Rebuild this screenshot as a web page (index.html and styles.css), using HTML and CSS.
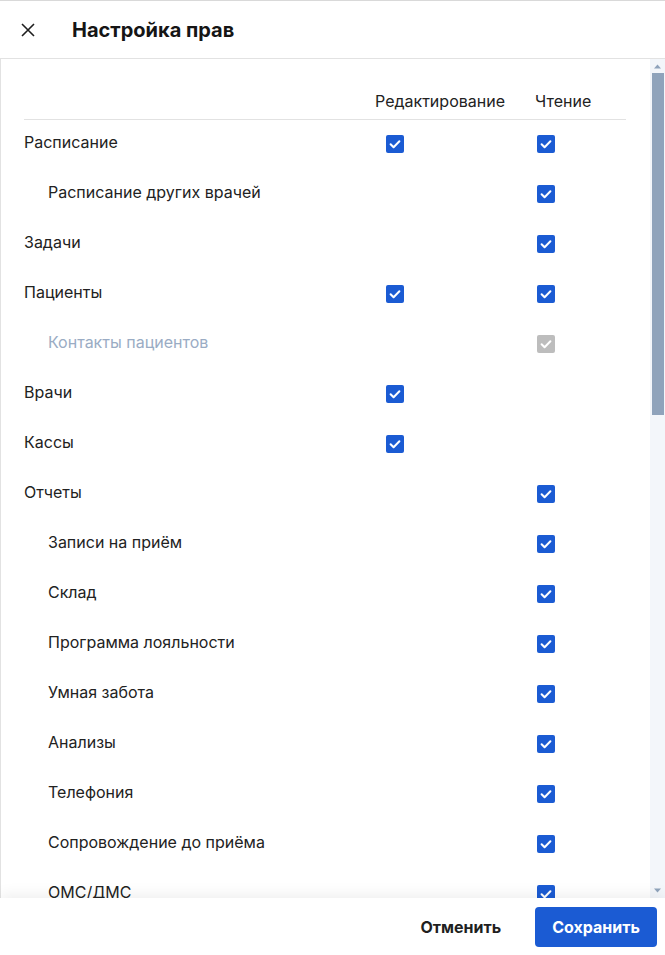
FILE: index.html
```html
<!DOCTYPE html>
<html lang="ru">
<head>
<meta charset="utf-8">
<title>Настройка прав</title>
<link rel="stylesheet" href="styles.css">
</head>
<body>
<div class="dialog">
  <header class="dialog-header">
    <button class="close-btn" aria-label="Закрыть">
      <svg width="14" height="14" viewBox="0 0 14 14"><path d="M1 1L13 13M13 1L1 13" stroke="#1f1f1f" stroke-width="1.6" fill="none"/></svg>
    </button>
    <h1 class="dialog-title">Настройка прав</h1>
  </header>
  <div class="dialog-main">
    <div class="dialog-body">
      <div class="perm-head">
        <div></div>
        <div class="col-title">Редактирование</div>
        <div class="col-title">Чтение</div>
      </div>
      <div class="perm-list" id="list"></div>
    </div>
    <div class="scrollbar" aria-hidden="true">
      <div class="sb-btn"><svg width="15" height="15" viewBox="0 0 15 15"><path d="M4 9.5L7.5 5.5L11 9.5Z" fill="#8fa3bb"/></svg></div>
      <div class="sb-track"><div class="sb-thumb"></div></div>
      <div class="sb-btn"><svg width="15" height="15" viewBox="0 0 15 15"><path d="M4 5.5L7.5 9.5L11 5.5Z" fill="#8fa3bb"/></svg></div>
    </div>
  </div>
  <footer class="dialog-footer">
    <button class="btn btn-text">Отменить</button>
    <button class="btn btn-primary">Сохранить</button>
  </footer>
</div>
<script src="app.js"></script>
</body>
</html>
```
FILE: app.js
```js
const rows = [
  ["Расписание", 0, 1, 1],
  ["Расписание других врачей", 1, 0, 1],
  ["Задачи", 0, 0, 1],
  ["Пациенты", 0, 1, 1],
  ["Контакты пациентов", 1, 0, 2],
  ["Врачи", 0, 1, 0],
  ["Кассы", 0, 1, 0],
  ["Отчеты", 0, 0, 1],
  ["Записи на приём", 1, 0, 1],
  ["Склад", 1, 0, 1],
  ["Программа лояльности", 1, 0, 1],
  ["Умная забота", 1, 0, 1],
  ["Анализы", 1, 0, 1],
  ["Телефония", 1, 0, 1],
  ["Сопровождение до приёма", 1, 0, 1],
  ["ОМС/ДМС", 1, 0, 1]
];
const check = (state) => {
  if (!state) return '<span class="cb-empty"></span>';
  const cls = state === 2 ? "cb cb-disabled" : "cb";
  return '<span class="' + cls + '"><svg width="18" height="18" viewBox="0 0 18 18"><path d="M4.6 9.2L7.6 12.2L13.4 6.2" stroke="#fff" stroke-width="2" fill="none" stroke-linecap="round" stroke-linejoin="round"/></svg></span>';
};
const list = document.getElementById("list");
list.innerHTML = rows.map(([name, sub, edit, read]) => {
  const cls = "perm-row" + (sub ? " sub" : "") + (read === 2 ? " disabled" : "");
  return '<div class="' + cls + '"><div class="perm-name">' + name + '</div><div class="cell cell-edit">' + check(edit) + '</div><div class="cell cell-read">' + check(read) + '</div></div>';
}).join("");
```
FILE: styles.css
```css
* { box-sizing: border-box; }
html, body { margin: 0; padding: 0; }
body {
  font-family: Inter, "Noto Sans", "Liberation Sans", sans-serif;
  color: #1f1f1f;
  background: #fff;
  overflow: hidden;
}
.dialog {
  height: 955px;
  display: flex;
  flex-direction: column;
}
.dialog-header {
  height: 59px;
  flex: none;
  border-top: 1px solid #d9d9d9;
  border-bottom: 1px solid #e2e2e2;
  display: flex;
  align-items: center;
  padding-left: 14px;
}
.close-btn {
  width: 28px;
  height: 28px;
  padding: 0;
  border: 0;
  background: none;
  display: flex;
  align-items: center;
  justify-content: center;
  margin-right: 30px;
}
.dialog-title {
  margin: 0;
  font-size: 20px;
  font-weight: 700;
  line-height: 24px;
  color: #151515;
}
.dialog-main {
  flex: 1;
  min-height: 0;
  display: flex;
  border-left: 1px solid #e2e2e2;
}
.dialog-body {
  flex: 1;
  min-width: 0;
  overflow: hidden;
  padding: 0 24px 0 23px;
}
.scrollbar {
  width: 15px;
  flex: none;
  display: flex;
  flex-direction: column;
  background: #f3f6fa;
}
.sb-btn {
  height: 15px;
  flex: none;
}
.sb-btn svg { display: block; }
.sb-track {
  flex: 1;
  padding: 0 1px 0 2px;
}
.sb-thumb {
  margin-top: -1px;
  height: 342px;
  background: #8fa3bb;
}
.perm-head, .perm-row {
  display: grid;
  grid-template-columns: 1fr 160px 91px;
}
.perm-head {
  height: 61px;
  align-items: end;
  padding-bottom: 8px;
  border-bottom: 1px solid #e2e2e2;
}
.col-title {
  font-size: 16px;
  line-height: 20px;
  color: #222;
}
.perm-row {
  height: 50px;
  align-items: center;
  padding-bottom: 3px;
}
.perm-name {
  font-size: 16px;
  line-height: 20px;
  color: #222;
  margin-bottom: 3px;
}
.perm-row.sub .perm-name { padding-left: 24px; }
.perm-row.disabled .perm-name { color: #9aacc4; }
.cell { display: flex; }
.cell-edit { padding-left: 11px; }
.cell-read { padding-left: 2px; }
.cb {
  width: 18px;
  height: 18px;
  border-radius: 2px;
  background: #1b5bd3;
  display: block;
}
.cb svg { display: block; }
.cb-disabled { background: #bdbdbd; }
.dialog-footer {
  height: 57px;
  flex: none;
  display: flex;
  justify-content: flex-end;
  align-items: center;
  gap: 18px;
  padding: 0 8px;
  box-shadow: 0 -3px 14px rgba(0, 0, 0, 0.07);
  position: relative;
  z-index: 1;
  background: #fff;
}
.btn {
  height: 40px;
  border: 0;
  border-radius: 4px;
  font-family: inherit;
  font-size: 16px;
  font-weight: 700;
  padding: 0 17px;
  cursor: pointer;
}
.btn-text {
  background: none;
  color: #1f1f1f;
  padding: 0 16px;
}
.btn-primary {
  background: #1b5bd3;
  color: #fff;
}
```
